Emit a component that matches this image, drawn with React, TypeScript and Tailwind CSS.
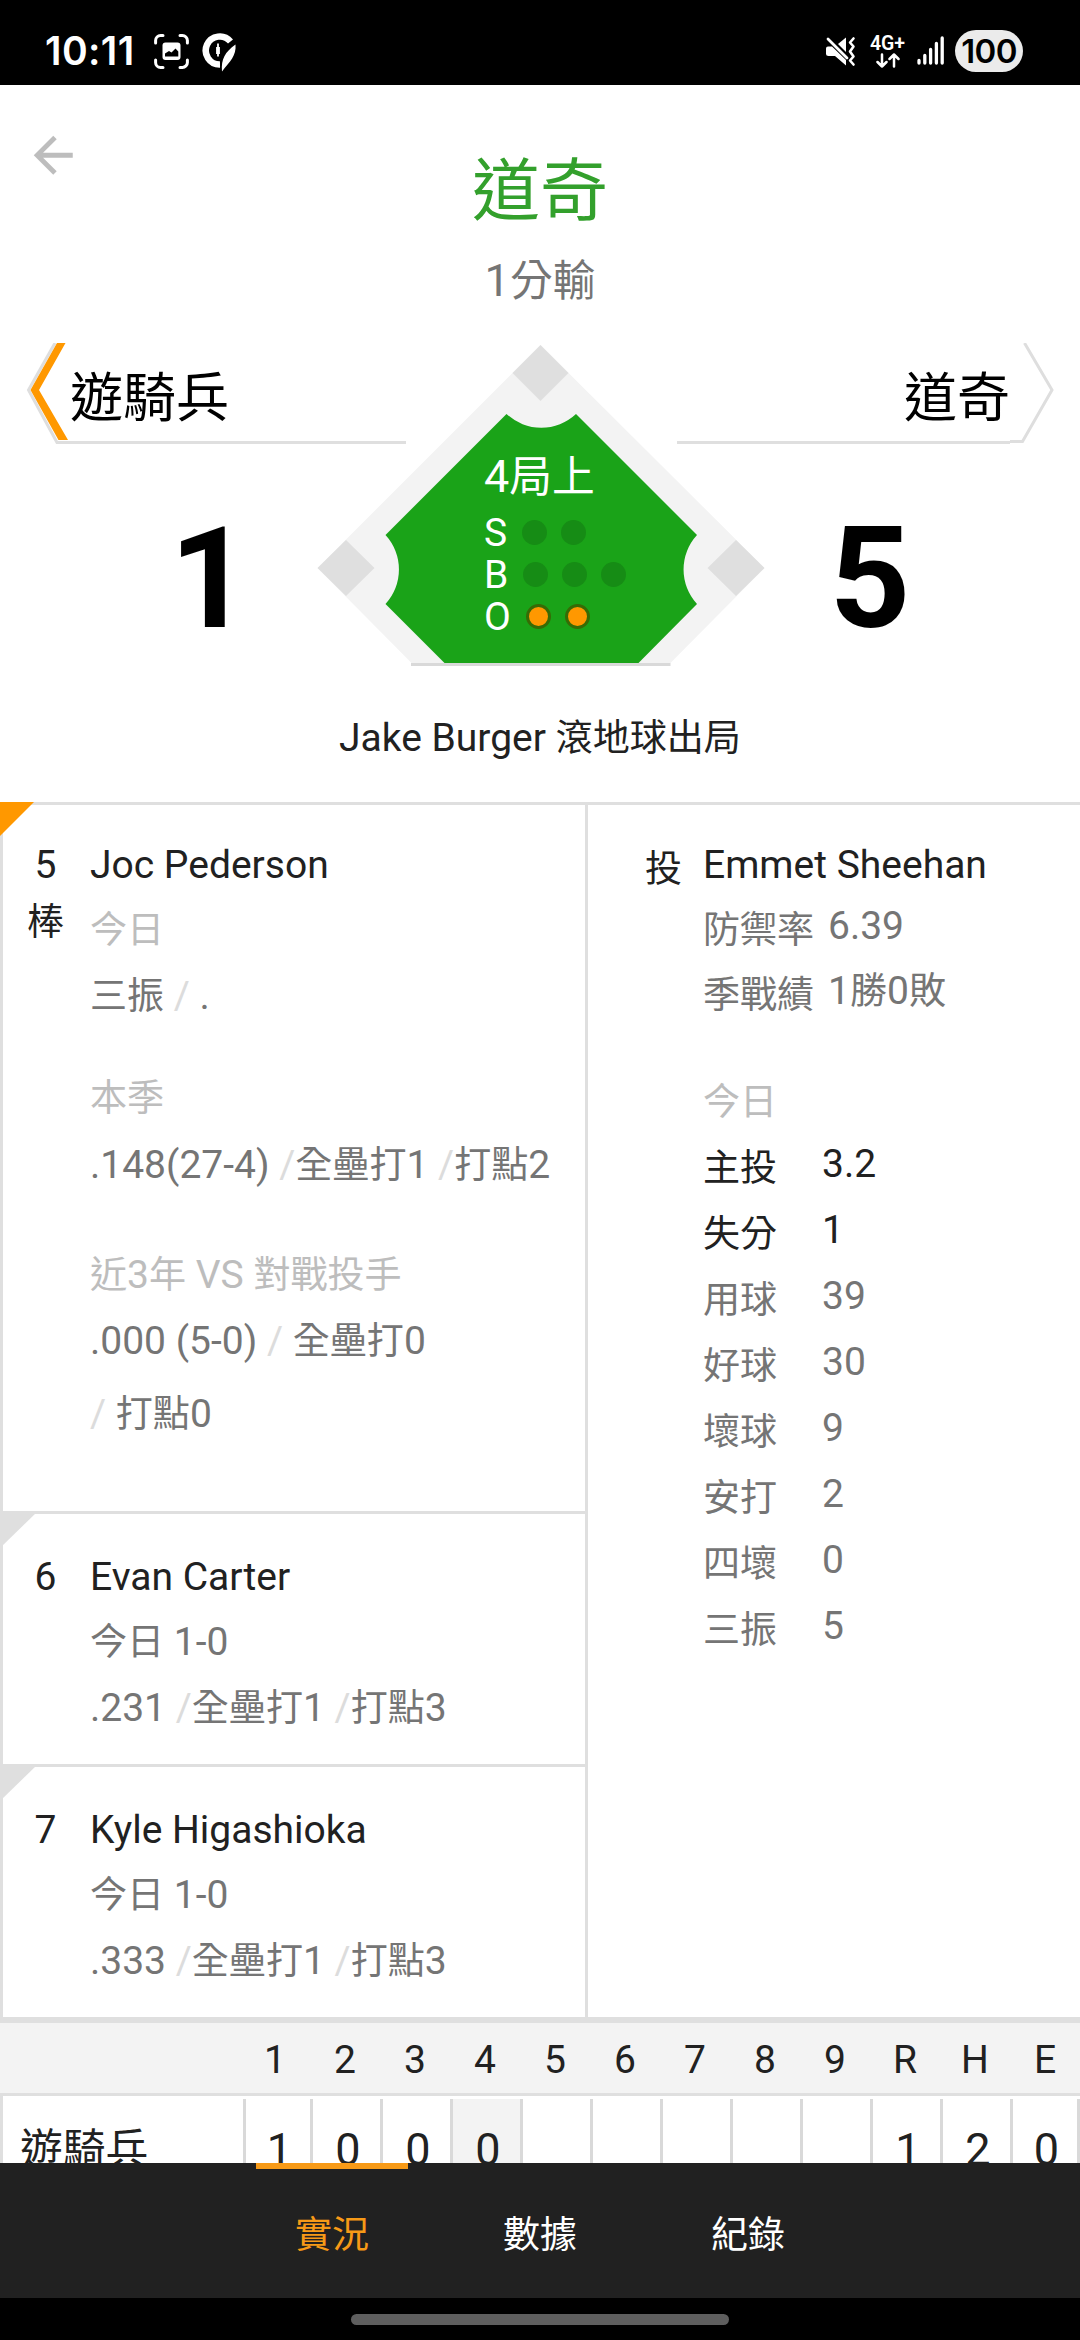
import React from "react";

/* Splits a string into Latin, CJK and slash runs so each gets its own size and tint. */
function Mixed({ text }: { text: string }) {
  const parts = text.split(/([\u3400-\u9fff]+|\/)/).filter((p) => p !== "");
  return (
    <>
      {parts.map((p, i) =>
        p === "/" ? (
          <span key={i} className="text-[#dcdcdc]">/</span>
        ) : /[\u3400-\u9fff]/.test(p) ? (
          <span key={i} className="text-[0.95em] leading-[0]">{p}</span>
        ) : (
          <span key={i}>{p}</span>
        )
      )}
    </>
  );
}

function Line({ text, className = "" }: { text: string; className?: string }) {
  return (
    <div className={`h-[65px] whitespace-pre leading-[65px] ${className}`}>
      <Mixed text={text} />
    </div>
  );
}

function StatusBar() {
  return (
    <div className="flex h-[85px] shrink-0 items-start bg-black text-white">
      <div className="ml-[45px] mt-[27px] w-[109px] font-[Inter] text-[39px] font-semibold leading-[48px] tracking-[0.4px]">10:11</div>
      <svg className="mt-[34px] h-[35px] w-[35px]" viewBox="0 0 35 35" fill="none">
        <path d="M1.6 9V6.5a5 5 0 0 1 5-5H9M26 1.5h2.4a5 5 0 0 1 5 5V9M33.4 26v2.4a5 5 0 0 1-5 5H26M9 33.4H6.600a5 5 0 0 1-5-5V26" stroke="#fff" strokeWidth="3" strokeLinecap="round" />
        <rect x="8.500" y="8.500" width="18" height="17.500" rx="3" fill="#fff" />
        <path d="M11 22.500v-3l4-2.500 2.500 1.500 4-4 2.800 3v5z" fill="#000" />
      </svg>
      <svg className="ml-[12px] mt-[32px] h-[40px] w-[36px]" viewBox="0 0 36 40" fill="none">
        <path d="M29.500 9.500A14 14 0 1 0 19 32.500" stroke="#fff" strokeWidth="6.500" />
        <path d="M34.500 12.500C35.500 24 29 29 21 39.500 20 27 24 20 34.500 12.500z" fill="#fff" />
        <path d="M17 11.500v13M16 16h2v5h-2z" stroke="#fff" strokeWidth="1.800" />
      </svg>
      <svg className="ml-[588px] mt-[36px] h-[31px] w-[31px]" viewBox="0 0 31 31">
        <path d="M1 12.500q0-2 2-2h4L21 24v5.500L10 20H3.500Q1 20 1 18z" fill="#fff" />
        <path d="M13 8l8-6.500V16z" fill="#fff" />
        <path d="M3 3l19 19" stroke="#fff" strokeWidth="2.800" strokeLinecap="round" />
        <path d="M28.500 2.500l-3.500 4 3.500 4-3.500 5 3.500 5-3.500 4 3.500 4" stroke="#fff" strokeWidth="2.600" fill="none" strokeLinecap="round" strokeLinejoin="round" />
      </svg>
      <div className="ml-[14px] mt-[35px] flex w-[35px] flex-col items-center">
        <div className="font-[Roboto] text-[19.5px] font-semibold leading-[18px]">4G+</div>
        <svg className="h-[15px] w-[24px]" viewBox="0 0 24 15" fill="none" stroke="#fff" strokeWidth="2.500" strokeLinecap="round" strokeLinejoin="round">
          <path d="M6 1.500v12M1.500 9L6 13.500 10.500 9M18 13.500V1.500M13.500 6L18 1.500 22.500 6" />
        </svg>
      </div>
      <svg className="ml-[12px] mt-[36px] h-[30px] w-[28px]" viewBox="0 0 28 30" stroke="#fff" strokeWidth="3.300" strokeLinecap="round">
        <path d="M2 24.500V27M7.800 19.500V27M13.600 13.500V27M19.400 7.500V27M25.200 2V27" />
      </svg>
      <div className="ml-[10px] mt-[30px] h-[42px] w-[68px] rounded-full bg-[#ebebeb] text-center font-[Inter] text-[33px] font-semibold leading-[42px] tracking-[-0.6px] text-black">100</div>
    </div>
  );
}

function Field() {
  return (
    <svg className="h-[325px] w-[452px] shrink-0" viewBox="315.500 343 452 325">
      <path d="M540 345L764 568 670 663H411L317 568z" fill="#f3f3f3" />
      <path d="M540 345l28 28-28 28-28-28zM345.500 540l28.500 28-28.500 28-28.500-28zM735.500 540l28.500 28-28.500 28-28.500-28z" fill="#dfdfdf" />
      <path d="M506 414A51 51 0 0 0 575.500 414L696.500 535A51 51 0 0 0 696.500 604L638 663H444L385 604A51 51 0 0 0 385 535z" fill="#1aa318" />
      <path d="M410.500 664.500H670" stroke="#d9d9d9" strokeWidth="3" />
    </svg>
  );
}

const counts = [
  { label: "S", total: 2, on: 0, gap: "pl-[38px]" },
  { label: "B", total: 3, on: 0, gap: "pl-[39px]" },
  { label: "O", total: 2, on: 2, gap: "pl-[42px]" },
];

function Hero() {
  return (
    <div className="flex h-[323px] shrink-0 text-black">
      <div className="w-[406px] shrink-0">
        <div className="flex h-[101px] pl-[25px]">
          <svg className="h-[101px] w-[45px]" viewBox="25 343 45 101">
            <path d="M55 343L28.500 390 57 442.500H70" fill="none" stroke="#dedede" strokeWidth="3" />
            <path d="M57 343h8.500L39 390l29 50H58.500L30.500 390z" fill="#ff9800" />
          </svg>
          <div className="w-[336px] border-b-[3px] border-[#dfdfdf] pt-[17px] text-[53px] leading-[78px]">遊騎兵</div>
        </div>
        <div className="mt-[64px] w-[420px] text-center text-[141px] font-bold leading-none">1</div>
      </div>
      <div className="relative flex w-[271px] shrink-0 justify-center">
        <Field />
        <div className="absolute left-[78px] top-[107px] text-white">
          <div className="h-[54px] whitespace-nowrap text-[45px] leading-[54px]"><Mixed text="4局上" /></div>
          <div className="mt-[7px]">
            {counts.map((c) => (
              <div key={c.label} className="flex h-[42px] items-center text-[39px] leading-[42px]">
                <div className="w-0 translate-y-px">{c.label}</div>
                <div className={`flex gap-[14px] ${c.gap}`}>
                  {Array.from({ length: c.total }, (_, i) => (
                    <div key={i} className={i < c.on ? "h-[25px] w-[25px] rounded-full border-[3px] border-[#376b05] bg-[#ff9800]" : "h-[25px] w-[25px] rounded-full bg-[#168c15]"} />
                  ))}
                </div>
              </div>
            ))}
          </div>
        </div>
      </div>
      <div className="w-[403px] shrink-0">
        <div className="flex h-[101px]">
          <div className="w-[333px] border-b-[3px] border-[#dfdfdf] pt-[17px] text-right text-[53px] leading-[78px]">道奇</div>
          <svg className="h-[101px] w-[45px]" viewBox="1010 343 45 101">
            <path d="M1024.500 343L1052 390 1022.500 441.500H1010" fill="none" stroke="#dedede" strokeWidth="3" />
          </svg>
        </div>
        <div className="ml-[-17px] mt-[64px] w-[420px] text-center text-[141px] font-bold leading-none">5</div>
      </div>
    </div>
  );
}

function Corner({ active = false }: { active?: boolean }) {
  return (
    <svg className="absolute -left-[3px] -top-[3px] h-[38px] w-[38px]" viewBox="0 0 38 38">
      <path d={active ? "M0 0H34L0 34z" : "M0 0H38L0 37z"} fill={active ? "#ff9800" : "#dfdfdf"} />
    </svg>
  );
}

function Batter({ order, children, className = "" }: { order: string; children: React.ReactNode; className?: string }) {
  return (
    <div className={`relative flex border-l-[3px] border-[#dfdfdf] ${className}`}>
      <div className="mr-[2px] flex w-[85px] flex-col items-center text-[39px] leading-[65px]">
        {order.split("").map((ch, i) => (
          <div key={i} className={i ? "-mt-[8px]" : ""}><Mixed text={ch} /></div>
        ))}
      </div>
      <div className="text-[39px] text-[#757575]">{children}</div>
    </div>
  );
}

const season = [
  ["防禦率", "6.39"],
  ["季戰績", "1勝0敗"],
];
const today = [
  ["主投", "3.2"],
  ["失分", "1"],
  ["用球", "39"],
  ["好球", "30"],
  ["壞球", "9"],
  ["安打", "2"],
  ["四壞", "0"],
  ["三振", "5"],
];

const heads = ["1", "2", "3", "4", "5", "6", "7", "8", "9", "R", "H", "E"];
const cells = ["1", "0", "0", "0", "", "", "", "", "", "1", "2", "0"];

export default function App() {
  return (
    <div lang="zh-Hant" className="flex h-[2340px] w-[1080px] flex-col overflow-hidden bg-white font-[Roboto,Noto_Sans_CJK_TC,sans-serif] text-[#212121]">
      <StatusBar />
      <div className="grid h-[258px] shrink-0 grid-cols-[120px_1fr_120px]">
        <svg className="ml-[24px] mt-[41px] h-[58.5px] w-[58.5px]" viewBox="0 0 24 24">
          <path d="M20 11H7.830l5.590-5.590L12 4l-8 8 8 8 1.410-1.410L7.830 13H20v-2z" fill="#bdbdbd" />
        </svg>
        <div className="text-center">
          <div className="mt-[57px] h-[100px] text-[68px] leading-[100px] text-[#33a02c]">道奇</div>
          <div className="mt-[9px] text-[45px] leading-[60px] text-[#757575]"><Mixed text="1分輸" /></div>
        </div>
      </div>
      <Hero />
      <div className="h-[136px] shrink-0 pt-[42px] text-center text-[39px] leading-[60px]"><Mixed text="Jake Burger 滾地球出局" /></div>

      <div className="flex h-[1221px] shrink-0 border-b-[6px] border-t-[3px] border-[#dfdfdf]">
        <div className="w-[588px] shrink-0 border-r-[3px] border-[#dfdfdf]">
          <Batter order="5棒" className="h-[706px] pt-[28px]">
            <Corner active />
            <Line text="Joc Pederson" className="text-[#212121]" />
            <Line text="今日" className="text-[#bdbdbd]" />
            <Line text="三振 / ." className="mt-[1px]" />
            <Line text="本季" className="mt-[37px] text-[#bdbdbd]" />
            <Line text=".148(27-4) /全壘打1 /打點2" className="mt-[2px]" />
            <Line text="近3年 VS 對戰投手" className="mt-[45px] text-[#bdbdbd]" />
            <Line text=".000 (5-0) / 全壘打0" className="mt-[1px]" />
            <Line text="/ 打點0" className="mt-[8px]" />
          </Batter>
          <Batter order="6" className="h-[253px] border-t-[3px] pt-[31px]">
            <Corner />
            <Line text="Evan Carter" className="text-[#212121]" />
            <Line text="今日 1-0" />
            <Line text=".231 /全壘打1 /打點3" className="mt-[1px]" />
          </Batter>
          <Batter order="7" className="h-[253px] border-t-[3px] pt-[31px]">
            <Corner />
            <Line text="Kyle Higashioka" className="text-[#212121]" />
            <Line text="今日 1-0" />
            <Line text=".333 /全壘打1 /打點3" className="mt-[1px]" />
          </Batter>
        </div>
        <div className="flex pt-[32px] text-[39px]">
          <div className="w-[115px] pl-[57px] pt-[4px] leading-[56px]"><Mixed text="投" /></div>
          <div>
            <div className="mb-[1px] h-[56px] leading-[56px]">Emmet Sheehan</div>
            {season.map(([k, v]) => (
              <div key={k} className="flex h-[65px] leading-[65px] text-[#757575]">
                <div className="w-[125px] pt-[4px]"><Mixed text={k} /></div>
                <div><Mixed text={v} /></div>
              </div>
            ))}
            <div className="mt-[48px] h-[59px] leading-[60px] text-[#bdbdbd]"><Mixed text="今日" /></div>
            {today.map(([k, v], i) => (
              <div key={k} className={`flex h-[66px] leading-[66px] ${i < 2 ? "text-[#212121]" : "text-[#757575]"}`}>
                <div className="w-[119px] pt-[4px]"><Mixed text={k} /></div>
                <div>{v}</div>
              </div>
            ))}
          </div>
        </div>
      </div>

      <div className="flex h-[73px] shrink-0 border-b-[3px] border-[#dfdfdf] bg-[#f3f3f3] pl-[240px] text-[39px] leading-[74px]">
        {heads.map((h) => (
          <div key={h} className="w-[70px] text-center">{h}</div>
        ))}
      </div>
      <div className="flex h-[67px] shrink-0 overflow-hidden border-l-[3px] border-[#dfdfdf] pt-[3px] text-[45px] leading-[102px]">
        <div className="w-[243px] shrink-0 border-r-[3px] border-[#d9d9d9] pl-[17px]"><Mixed text="遊騎兵" /></div>
        {cells.map((c, i) => (
          <div key={i} className={`shrink-0 border-r-[3px] border-[#d9d9d9] pl-[3px] text-center ${i === 0 || i === 11 ? "w-[67px]" : "w-[70px]"} ${i === 3 ? "bg-[#f3f3f3]" : ""}`}>{c}</div>
        ))}
      </div>

      <div className="flex h-[135px] shrink-0 justify-center bg-[#212121] text-[37px] leading-[145px] text-white">
        {["實況", "數據", "紀錄"].map((t, i) => (
          <div key={t} className={`relative w-[208px] text-center ${i === 0 ? "text-[#f79a17]" : ""}`}>
            {i === 0 && <div className="absolute left-[28px] top-0 h-[6px] w-[152px] bg-[#f79a17]" />}
            {t}
          </div>
        ))}
      </div>
      <div className="flex h-[42px] shrink-0 justify-center bg-black pt-[16px]">
        <div className="h-[11px] w-[378px] rounded-full bg-[#5e5e5e]" />
      </div>
    </div>
  );
}
